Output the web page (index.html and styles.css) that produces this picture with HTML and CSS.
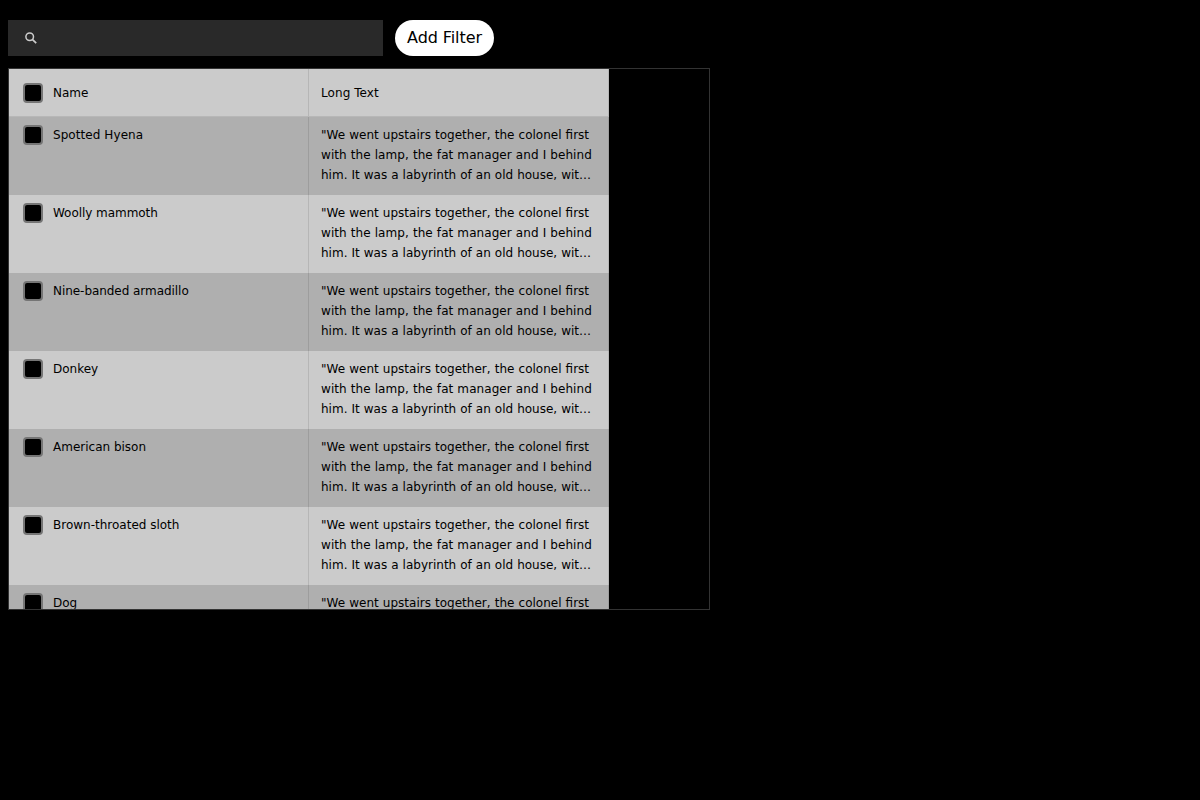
FILE: index.html
```html
<!DOCTYPE html>
<html lang="en">
<head>
<meta charset="utf-8">
<title>Data table</title>
<link rel="stylesheet" href="styles.css">
</head>
<body>
<div class="toolbar">
  <div class="search">
    <svg class="search-icon" viewBox="0 0 12 12" width="12" height="12" fill="none" stroke="#ccc"><circle cx="4.7" cy="4.7" r="3.8" stroke-width="1.5"/><path d="M7.3 7.3 L11.2 11.2" stroke-width="1.7"/></svg>
  </div>
  <button class="add-filter">Add Filter</button>
</div>
<div class="table">
  <div class="row header"><div class="cell"><span class="check"></span><span>Name</span></div><div class="cell"><span class="loose">Long Text</span></div></div>
  <div class="row dark"><div class="cell"><span class="check"></span><span class="loose">Spotted Hyena</span></div><div class="cell"><p class="long"><span class="first">"We went upstairs together, the colonel first</span><span class="second">with the lamp, the fat manager and I behind</span><span class="third">him. It was a labyrinth of an old house, wit…</span></p></div></div>
  <div class="row"><div class="cell"><span class="check"></span><span class="tight">Woolly mammoth</span></div><div class="cell"><p class="long"><span class="first">"We went upstairs together, the colonel first</span><span class="second">with the lamp, the fat manager and I behind</span><span class="third">him. It was a labyrinth of an old house, wit…</span></p></div></div>
  <div class="row dark"><div class="cell"><span class="check"></span><span class="tight">Nine-banded armadillo</span></div><div class="cell"><p class="long"><span class="first">"We went upstairs together, the colonel first</span><span class="second">with the lamp, the fat manager and I behind</span><span class="third">him. It was a labyrinth of an old house, wit…</span></p></div></div>
  <div class="row"><div class="cell"><span class="check"></span><span>Donkey</span></div><div class="cell"><p class="long"><span class="first">"We went upstairs together, the colonel first</span><span class="second">with the lamp, the fat manager and I behind</span><span class="third">him. It was a labyrinth of an old house, wit…</span></p></div></div>
  <div class="row dark"><div class="cell"><span class="check"></span><span>American bison</span></div><div class="cell"><p class="long"><span class="first">"We went upstairs together, the colonel first</span><span class="second">with the lamp, the fat manager and I behind</span><span class="third">him. It was a labyrinth of an old house, wit…</span></p></div></div>
  <div class="row"><div class="cell"><span class="check"></span><span>Brown-throated sloth</span></div><div class="cell"><p class="long"><span class="first">"We went upstairs together, the colonel first</span><span class="second">with the lamp, the fat manager and I behind</span><span class="third">him. It was a labyrinth of an old house, wit…</span></p></div></div>
  <div class="row dark"><div class="cell"><span class="check"></span><span>Dog</span></div><div class="cell"><p class="long"><span class="first">"We went upstairs together, the colonel first</span></p></div></div>
</div>
</body>
</html>
```
FILE: styles.css
```css
* {
  box-sizing: border-box;
}

body {
  margin: 0;
  padding: 20px 8px;
  background: #000;
  font-family: "DejaVu Sans", sans-serif;
}

.toolbar {
  display: flex;
  gap: 12px;
  height: 36px;
  margin-bottom: 12px;
}

.search {
  display: flex;
  align-items: center;
  width: 375px;
  padding-left: 17.4px;
  background: #292929;
}

.add-filter {
  width: 99px;
  padding: 0;
  border: 0;
  border-radius: 18px;
  background: #fff;
  color: #000;
  font: 16px/24px "DejaVu Sans", sans-serif;
  letter-spacing: -0.08px;
  white-space: nowrap;
}

.table {
  width: 702px;
  height: 542px;
  overflow: hidden;
  border: 1px solid #333;
  color: #000;
  font-size: 12px;
  line-height: 20px;
}

.row {
  display: flex;
  width: 600px;
  height: 78px;
  background: #cbcbcb;
}

.dark {
  background: #afafaf;
}

.header {
  height: 48px;
  border-bottom: 1px solid #b7b7b7;
}

.cell {
  display: flex;
  gap: 10px;
  width: 300px;
  padding: 8px 12px 0 14px;
  border-right: 1px solid rgba(0, 0, 0, 0.1);
}

.cell + .cell {
  padding-left: 12px;
}

.header .cell {
  padding-top: 14px;
}

.check {
  width: 20px;
  height: 20px;
  border: 2px solid #757575;
  border-radius: 4px;
  background: #000;
}

.loose {
  letter-spacing: 0.07px;
}

.tight {
  letter-spacing: -0.05px;
}

.long {
  margin: 0;
  white-space: nowrap;
}

.long span {
  display: block;
}

.first {
  word-spacing: 0.33px;
}

.second {
  letter-spacing: 0.07px;
  word-spacing: 0.15px;
}

.third {
  word-spacing: 0.22px;
}
```
